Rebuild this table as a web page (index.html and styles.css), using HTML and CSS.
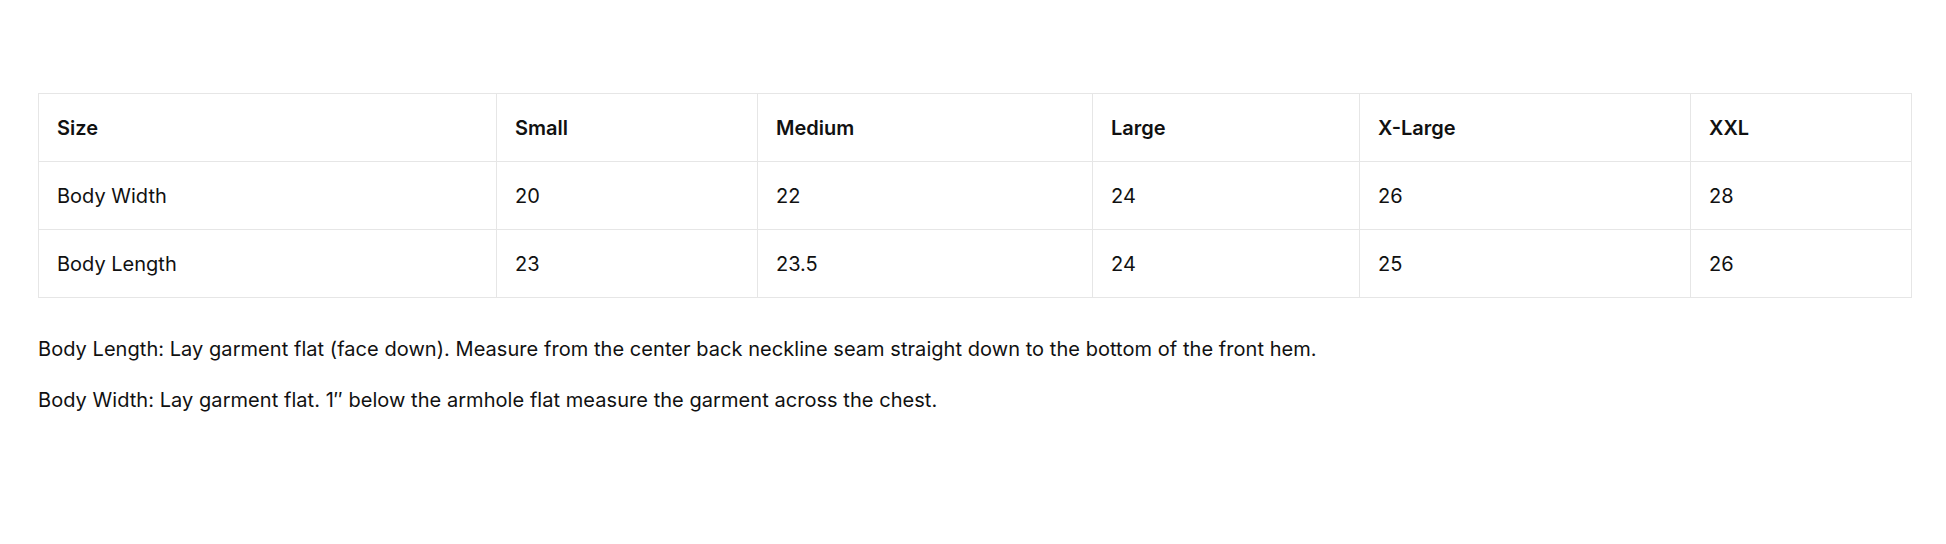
FILE: index.html
```html
<!DOCTYPE html>
<html lang="en">
<head>
<meta charset="utf-8">
<title>Size Chart</title>
<link rel="stylesheet" href="styles.css">
</head>
<body>
<main class="size-guide">
  <table class="size-table">
    <colgroup>
      <col class="c-label">
      <col class="c-s">
      <col class="c-m">
      <col class="c-l">
      <col class="c-xl">
      <col class="c-xxl">
    </colgroup>
    <thead>
      <tr>
        <th>Size</th>
        <th>Small</th>
        <th>Medium</th>
        <th>Large</th>
        <th>X-Large</th>
        <th>XXL</th>
      </tr>
    </thead>
    <tbody>
      <tr>
        <td>Body Width</td>
        <td>20</td>
        <td>22</td>
        <td>24</td>
        <td>26</td>
        <td>28</td>
      </tr>
      <tr>
        <td>Body Length</td>
        <td>23</td>
        <td>23.5</td>
        <td>24</td>
        <td>25</td>
        <td>26</td>
      </tr>
    </tbody>
  </table>
  <p class="note">Body Length: Lay garment flat (face down). Measure from the center back neckline seam straight down to the bottom of the front hem.</p>
  <p class="note">Body Width: Lay garment flat. 1″ below the armhole flat measure the garment across the chest.</p>
</main>
</body>
</html>
```
FILE: styles.css
```css
html, body {
  margin: 0;
  padding: 0;
  background: #ffffff;
}

body {
  font-family: Inter, "Liberation Sans", Arial, sans-serif;
  color: #111111;
  font-size: 20px;
}

.size-guide {
  padding: 93px 35px 0 38px;
}

.size-table {
  width: 1873px;
  border-collapse: collapse;
  table-layout: fixed;
  margin-bottom: 36px;
}

.c-label { width: 458px; }
.c-s { width: 261px; }
.c-m { width: 335px; }
.c-l { width: 267px; }
.c-xl { width: 331px; }
.c-xxl { width: 221px; }

.size-table th,
.size-table td {
  border: 1px solid #e6e6e6;
  padding: 18px 18px;
  height: 31px;
  line-height: 30px;
  text-align: left;
  vertical-align: middle;
}

.size-table th {
  font-weight: 600;
}

.size-table td {
  font-weight: 400;
}

.note {
  margin: 21px 0;
  line-height: 30px;
  letter-spacing: 0.05px;
}
```
